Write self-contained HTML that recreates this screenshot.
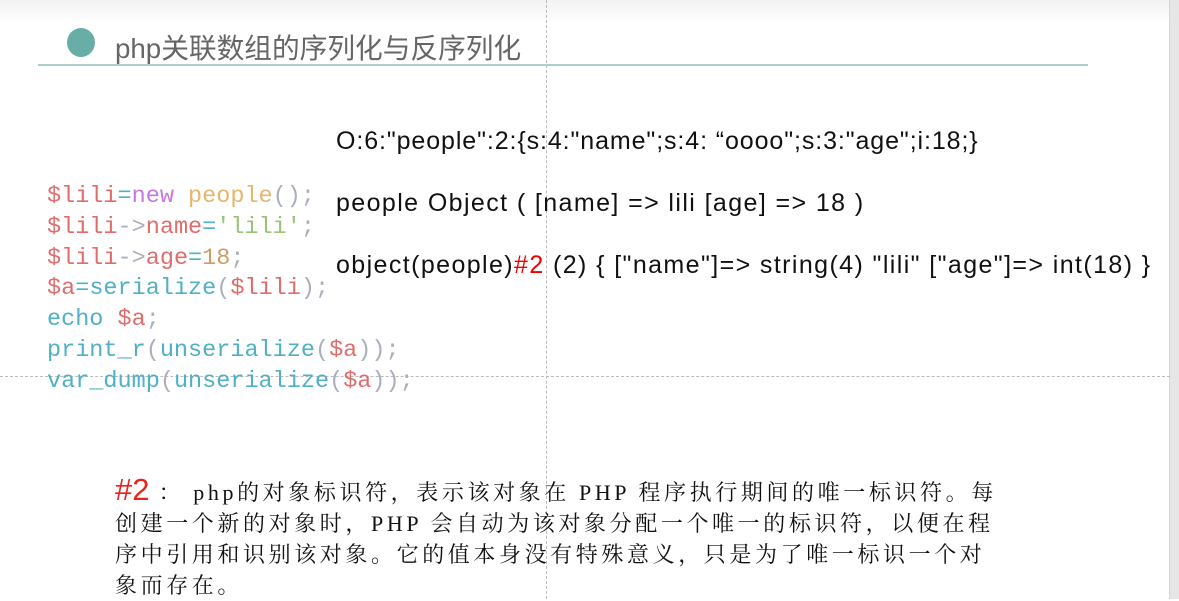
<!DOCTYPE html>
<html><head><meta charset="utf-8"><style>
body{margin:0;width:1179px;height:599px;overflow:hidden;background:#fff;position:relative;font-family:"Liberation Sans","Noto Sans CJK SC",sans-serif}
.top{position:absolute;left:0;top:0;width:1170px;height:24px;background:linear-gradient(#f2f2f2,#fff)}
.sb{position:absolute;right:0;top:0;width:9px;height:599px;background:#e6e6e6;border-left:1px solid #d6d6d6}
.vd{position:absolute;left:546px;top:0;height:599px;border-left:1px dashed #bbb}
.hd{position:absolute;left:0;top:376px;width:1170px;border-top:1px dashed #bbb}
.dot{position:absolute;left:67px;top:28px;width:28px;height:29px;border-radius:50%;background:#68aea6}
.title{position:absolute;left:115px;top:26px;font-size:27.7px;color:#666;white-space:nowrap}
.line{position:absolute;left:38px;top:64px;width:1050px;height:2px;background:#a9d0cc}
.code{position:absolute;left:47px;top:182px;font-family:"Liberation Mono",monospace;font-size:23.5px;line-height:30.8px;white-space:pre}
.r{color:#e06c6c}.c{color:#4fb0c6}.p{color:#c678dd}.y{color:#e5b56e}.g{color:#98c379}.o{color:#d19a66}.gr{color:#aab0bb}
.t{position:absolute;left:336px;font-size:25px;color:#111;white-space:nowrap}
.para{position:absolute;left:115px;top:474px;font-family:"Liberation Serif","Noto Serif CJK SC",serif;font-size:22px;line-height:31px;color:#111;white-space:pre;letter-spacing:3.6px}
</style></head><body>
<div class="top"></div><div class="sb"></div>
<div class="vd"></div><div class="hd"></div>
<div class="dot"></div>
<div class="title">php关联数组的序列化与反序列化</div>
<div class="line"></div>
<div class="code"><span class="r">$lili</span><span class="c">=</span><span class="p">new</span> <span class="y">people</span><span class="gr">();</span>
<span class="r">$lili</span><span class="gr">-&gt;</span><span class="r">name</span><span class="c">=</span><span class="g">'lili'</span><span class="gr">;</span>
<span class="r">$lili</span><span class="gr">-&gt;</span><span class="r">age</span><span class="c">=</span><span class="o">18</span><span class="gr">;</span>
<span class="r">$a</span><span class="c">=serialize</span><span class="gr">(</span><span class="r">$lili</span><span class="gr">);</span>
<span class="c">echo</span> <span class="r">$a</span><span class="gr">;</span>
<span class="c">print_r</span><span class="gr">(</span><span class="c">unserialize</span><span class="gr">(</span><span class="r">$a</span><span class="gr">));</span>
<span class="c">var_dump</span><span class="gr">(</span><span class="c">unserialize</span><span class="gr">(</span><span class="r">$a</span><span class="gr">));</span></div>
<div class="t" style="top:127px;letter-spacing:0.9px">O:6:"people":2:{s:4:"name";s:4: “oooo";s:3:"age";i:18;}</div>
<div class="t" style="top:189px;letter-spacing:1.4px">people Object ( [name] =&gt; lili [age] =&gt; 18 )</div>
<div class="t" style="top:251px;letter-spacing:1.4px">object(people)<span style="color:#e00">#2</span> (2) { ["name"]=&gt; string(4) "lili" ["age"]=&gt; int(18) }</div>
<div class="para"><span style="color:#e8231a;font-family:'Liberation Sans',sans-serif;font-size:31px;letter-spacing:0">#2</span> ： php的对象标识符，表示该对象在 PHP 程序执行期间的唯一标识符。每
创建一个新的对象时，PHP 会自动为该对象分配一个唯一的标识符，以便在程
序中引用和识别该对象。它的值本身没有特殊意义，只是为了唯一标识一个对
象而存在。</div>
</body></html>
